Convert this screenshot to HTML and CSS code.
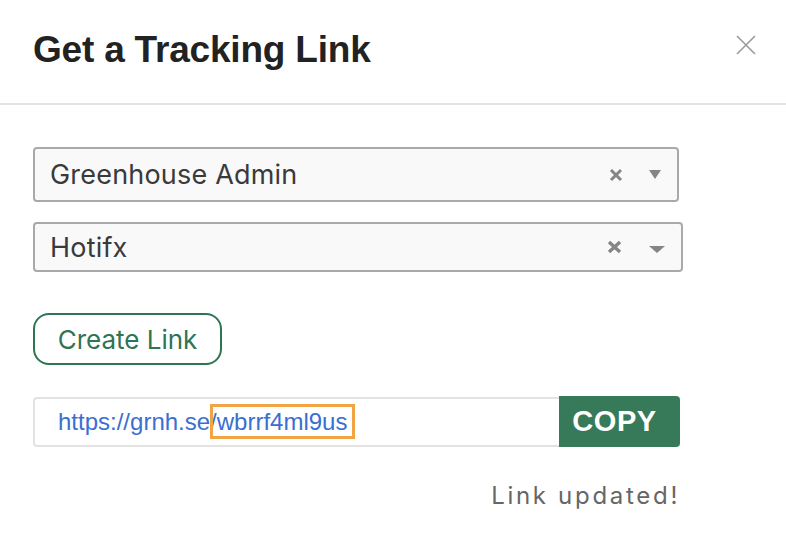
FILE: index.html
```html
<!DOCTYPE html>
<html lang="en">
<head>
  <meta charset="UTF-8">
  <title>Get a Tracking Link</title>
  <link rel="stylesheet" href="styles.css">
</head>
<body>

  <div class="modal">
    <div class="modal-header">
      <h2>Get a Tracking Link</h2>
      <button class="close-btn" aria-label="Close">
        <svg width="20" height="20" viewBox="0 0 20 20">
          <path d="M1 1 L19 19 M19 1 L1 19" stroke="#9a9a9a" stroke-width="1.6" fill="none"/>
        </svg>
      </button>
    </div>

    <div class="modal-body">
      <div class="select select-wide">
        <span class="select-value">Greenhouse Admin</span>
        <svg class="select-clear" width="14" height="14" viewBox="0 0 14 14">
          <path d="M2 2 L12 12 M12 2 L2 12" stroke="#858585" stroke-width="3" fill="none"/>
        </svg>
        <span class="select-arrow arrow-small"></span>
      </div>

      <div class="select select-wider">
        <span class="select-value">Hotifx</span>
        <svg class="select-clear" width="15" height="14" viewBox="0 0 15 14">
          <path d="M2 2 L13 12 M13 2 L2 12" stroke="#858585" stroke-width="3.4" fill="none"/>
        </svg>
        <span class="select-arrow arrow-big"></span>
      </div>

      <button class="create-btn">Create Link</button>

      <div class="link-row">
        <div class="link-field">
          <span class="link-text">https://grnh.se/<span class="link-token">wbrrf4ml9us</span></span>
        </div>
        <button class="copy-btn">COPY</button>
      </div>

      <div class="status">Link updated!</div>
    </div>
  </div>

</body>
</html>
```

FILE: styles.css
```css
:root {
  --green: #2f7453;
  --green-fill: #367a59;
  --border: #a9a9a9;
  --text: #333;
  --muted: #666;
  --link: #3a6fd2;
  --highlight: #f0a444;
}

body {
  margin: 0;
  padding: 0;
  background: #fff;
  font-family: Inter, "Noto Sans", sans-serif;
  color: var(--text);
}

.modal {
  width: 786px;
}

.modal-header {
  display: flex;
  justify-content: space-between;
  align-items: center;
  padding: 0 30px 0 33px;
  border-bottom: 2px solid #e3e3e3;
  box-sizing: border-box;
  height: 105px;
}

.modal-header h2 {
  margin: 0;
  margin-top: -4px;
  font-family: "Liberation Sans", Arial, sans-serif;
  font-weight: bold;
  font-size: 37px;
  letter-spacing: -0.2px;
  color: #222;
}

.close-btn {
  background: none;
  border: none;
  padding: 0;
  margin-top: -14px;
  cursor: pointer;
  display: flex;
}

.modal-body {
  padding: 42px 33px 0;
  display: flex;
  flex-direction: column;
  align-items: flex-start;
}

.select {
  display: flex;
  align-items: center;
  background: #f9f9f9;
  border: 2px solid var(--border);
  border-radius: 4px;
  box-sizing: border-box;
  padding: 0 16px 0 15px;
}

.select-wide {
  width: 646px;
  height: 55px;
}

.select-wider {
  width: 650px;
  height: 50px;
  margin-top: 20px;
}

.select-value {
  flex: 1;
  font-size: 27px;
  color: #3a3a3a;
  letter-spacing: 0.2px;
}

.select-clear {
  margin-right: 26px;
}

.select-wider .select-clear {
  margin-right: 27px;
}

.select-arrow {
  width: 0;
  height: 0;
  border-left: 6px solid transparent;
  border-right: 6px solid transparent;
  border-top: 9px solid #858585;
}

.arrow-big {
  border-left-width: 8px;
  border-right-width: 8px;
  border-top-width: 7px;
  margin-top: 4px;
}

.create-btn {
  margin-top: 41px;
  width: 189px;
  height: 52px;
  background: #fff;
  border: 2px solid var(--green);
  border-radius: 16px;
  color: var(--green);
  font-family: Inter, "Noto Sans", sans-serif;
  font-size: 26px;
  cursor: pointer;
}

.link-row {
  display: flex;
  margin-top: 32px;
}

.link-field {
  width: 526px;
  height: 50px;
  box-sizing: border-box;
  border: 2px solid #e2e2e2;
  border-right: none;
  border-radius: 4px 0 0 4px;
  display: flex;
  align-items: center;
  padding-left: 23px;
}

.link-text {
  font-family: "Liberation Sans", Arial, sans-serif;
  font-size: 24px;
  color: var(--link);
}

.link-token {
  border: 3px solid var(--highlight);
  margin-left: -7px;
  padding: 1px 5px 1px 4px;
}

.copy-btn {
  width: 121px;
  height: 51px;
  margin-top: -1px;
  padding: 0 10px 0 0;
  background: var(--green-fill);
  border: none;
  border-radius: 0 4px 4px 0;
  color: #fff;
  font-family: "Liberation Sans", Arial, sans-serif;
  font-weight: bold;
  font-size: 29px;
  letter-spacing: 0.6px;
  cursor: pointer;
}

.status {
  align-self: flex-end;
  margin-right: 73px;
  margin-top: 34px;
  font-size: 24px;
  color: var(--muted);
  letter-spacing: 2.7px;
}
```
